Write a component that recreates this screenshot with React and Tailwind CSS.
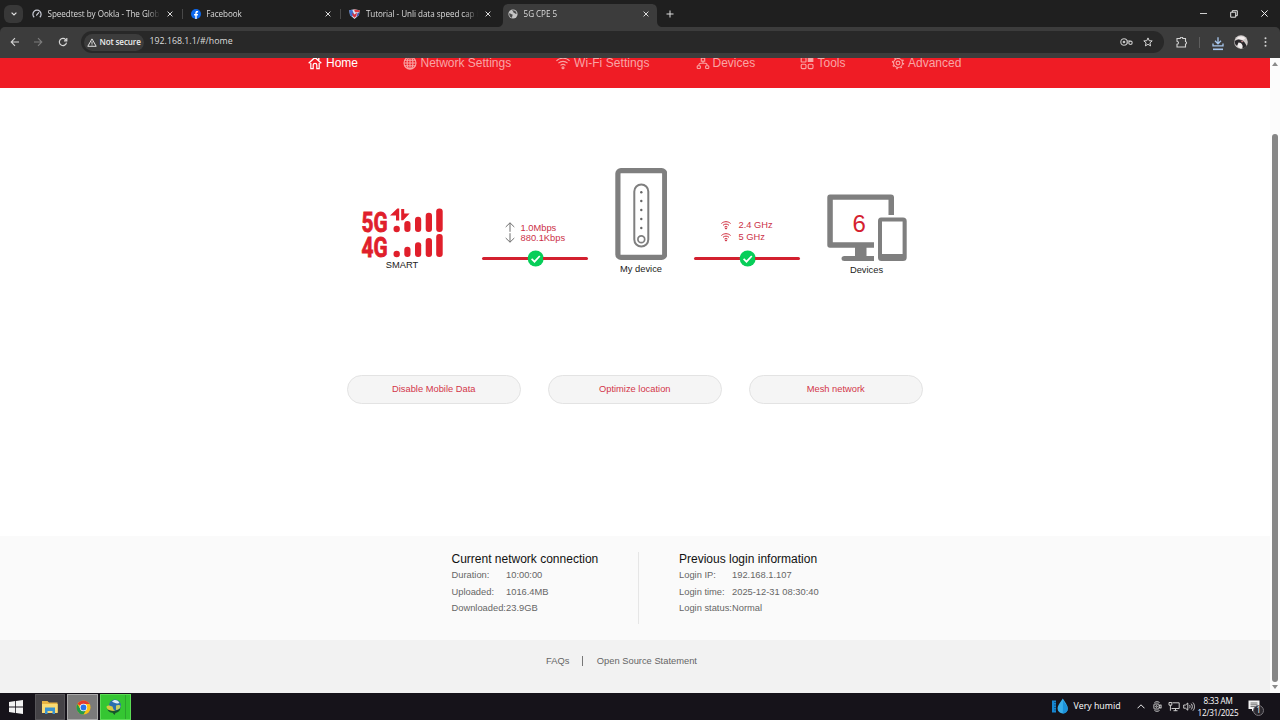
import React from "react";
import clsx from "clsx";

const TABS = [
  { title: "Speedtest by Ookla - The Glob", icon: "speedtest" },
  { title: "Facebook", icon: "facebook" },
  { title: "Tutorial - Unli data speed cap b", icon: "shield" },
  { title: "5G CPE 5", icon: "globe", active: true },
];

const NAV_ITEMS = [
  { label: "Home", icon: "home", width: "w-[95px]", text: "pl-[4px]", active: true },
  { label: "Network Settings", icon: "globe", width: "w-[153px]", text: "pl-[3.5px]" },
  { label: "Wi-Fi Settings", icon: "wifi", width: "w-[140px]", text: "pl-[4px] tracking-[0.07px]" },
  { label: "Devices", icon: "devices", width: "w-[104px]", text: "pl-[2.5px]" },
  { label: "Tools", icon: "tools", width: "w-[91px]", text: "pl-[3.5px]" },
  { label: "Advanced", icon: "gear", width: "w-[80px]", text: "pl-[3px]" },
];

const CONNECTION = [
  ["Duration:", "10:00:00"],
  ["Uploaded:", "1016.4MB"],
  ["Downloaded:", "23.9GB"],
];

const LOGIN = [
  ["Login IP:", "192.168.1.107"],
  ["Login time:", "2025-12-31 08:30:40"],
  ["Login status:", "Normal"],
];

const Favicon = ({ name }) => {
  if (name === "speedtest") {
    return (
      <svg viewBox="0 0 10 10" className="h-[10px] w-[10px] shrink-0" fill="none" stroke="#c9ccd6" strokeWidth="1.2">
        <path d="M2.2 8.3A4.1 4.1 0 1 1 7.8 8.3" />
        <path d="M4.6 6.2 6.7 3.6" strokeLinecap="round" />
      </svg>
    );
  }
  if (name === "facebook") {
    return (
      <svg viewBox="0 0 10 10" className="h-[10px] w-[10px] shrink-0">
        <circle cx="5" cy="5" r="5" fill="#0c68ee" />
        <path
          d="M4.3 10V6.6H3.1V5.1h1.2V4.1c0-1.5.7-2.1 1.9-2.1.4 0 .7 0 .9.1v1.3h-.6c-.6 0-.8.3-.8.8v.9h1.4L6.8 6.6H5.7V10z"
          fill="#fff"
        />
      </svg>
    );
  }
  if (name === "shield") {
    return (
      <svg viewBox="0 0 11 10" className="h-[10px] w-[11px] shrink-0">
        <path d="M.3 1.2 5.5.3l5.2.9L10 6 5.5 10 1 6z" fill="#dfe5f5" />
        <path d="M.3 1.2 3.2.8 5 5 3 7.8 1 6z" fill="#3f6fd0" />
        <path d="M5 .4 10.7 1.2 10.4 3 6 3.2z" fill="#e03b3f" />
        <path d="M3 3.6 5.5 5.6 8 3.6 7.4 7 5.5 8.8 3.8 7z" fill="#d3303c" />
        <path d="M8.6 3.8 10.3 3.6 10 6 7.6 8z" fill="#3a55b5" />
      </svg>
    );
  }
  return (
    <svg viewBox="0 0 10 10" className="h-[10px] w-[10px] shrink-0">
      <circle cx="5" cy="5" r="4.6" fill="#c5c5c5" />
      <path
        d="M1.2 4.2C2.6 4 3 5.2 4 5.3c.8.2.7 1 .3 1.6-.3.6 0 1.4-.4 1.9C2 8.3 1 6.5 1.2 4.2zM4 1.2c.2 1 1.4.7 1.3 1.7 0 .8 1.2.6 1.5 1.3.3.7 1.2.7 1.9.5C8.5 2.8 7 1 4 1.2z"
        fill="#4a4a4a"
      />
    </svg>
  );
};

const CloseIcon = ({ className }) => (
  <svg viewBox="0 0 6 6" className={clsx("shrink-0", className)} fill="none" stroke="#dedede" strokeWidth="1">
    <path d="M.6.6 5.4 5.4M5.4.6.6 5.4" />
  </svg>
);

const TabStrip = () => (
  <div className="flex h-[27px] items-center bg-[#1f1f1f] text-[#dcdcdc]">
    <div className="ml-[4px] flex h-[18px] w-[19px] items-center justify-center rounded-[6px] bg-[#383838]">
      <svg viewBox="0 0 6 4" className="h-[4px] w-[6px]" fill="none" stroke="#e2e2e2" strokeWidth="1.2">
        <path d="M.6.6 3 3 5.4.6" />
      </svg>
    </div>
    <div className="ml-[1px] flex h-full">
      {TABS.map((tab, i) => (
        <div
          key={tab.title}
          className={clsx("relative flex h-full items-center pl-[8px]", tab.active ? "w-[159px]" : "w-[158.7px]")}
        >
          {tab.active && (
            <svg viewBox="0 0 166 23" className="absolute top-[4px] left-[-3px] h-[23px] w-[166px]" fill="#3c3c3c">
              <path d="M0 23C4 23 6 21 6 17V6C6 2 8 0 12 0H154C158 0 160 2 160 6V17C160 21 162 23 166 23z" />
            </svg>
          )}
          <span className="relative flex w-full items-center">
            <Favicon name={tab.icon} />
            <span className="ml-[5.5px] w-[112.5px] overflow-hidden text-[8.1px] leading-[12px] tracking-[-0.05px] whitespace-nowrap [mask-image:linear-gradient(to_right,#000_88%,transparent)]">
              {tab.title}
            </span>
            <CloseIcon className="ml-[6.5px] h-[6px] w-[6px]" />
          </span>
          {i < 2 && <span className="absolute right-0 h-[10px] w-px bg-[#484848]" />}
        </div>
      ))}
    </div>
    <svg viewBox="0 0 8 8" className="ml-[7px] h-[8px] w-[8px]" fill="none" stroke="#dedede" strokeWidth="1">
      <path d="M4 .5v7M.5 4h7" />
    </svg>
    <div className="mr-[12px] ml-auto flex items-center gap-[23px]">
      <span className="h-px w-[7px] bg-[#cfcfcf]" />
      <svg viewBox="0 0 8 8" className="h-[8px] w-[8px]" fill="none" stroke="#e5e5e5" strokeWidth="1">
        <path d="M.7 2.2h5v5h-5zM2.3 2.2V.7h5v5H5.7" />
      </svg>
      <svg viewBox="0 0 7 7" className="h-[7px] w-[7px]" fill="none" stroke="#efefef" strokeWidth="1">
        <path d="m.4.4 6.2 6.2M6.6.4.4 6.6" />
      </svg>
    </div>
  </div>
);

const Toolbar = () => (
  <div className="bg-[#1f1f1f]">
    <div className="flex h-[31px] items-center rounded-t-[5px] bg-[#3c3c3c] pb-[1px]">
      <svg viewBox="0 0 10 10" className="ml-[10px] h-[10px] w-[10px]" fill="none" stroke="#d5d5d5" strokeWidth="1.1">
        <path d="M9 5H1.3M5 1.2 1.2 5 5 8.8" />
      </svg>
      <svg viewBox="0 0 10 10" className="ml-[13px] h-[10px] w-[10px]" fill="none" stroke="#7d7d7d" strokeWidth="1.1">
        <path d="M1 5h7.7M5 1.2 8.8 5 5 8.8" />
      </svg>
      <svg viewBox="0 0 10 10" className="ml-[14.5px] h-[10px] w-[10px]" fill="none" stroke="#d5d5d5" strokeWidth="1.2">
        <path d="M8.5 5.6A3.6 3.6 0 1 1 7.7 2.6L8.6 3.6M8.8 1v2.8H6" />
      </svg>
      <div className="ml-[13.5px] flex h-[22px] w-[1083px] items-center rounded-full bg-[#282828]">
        <div className="ml-[3px] flex h-[17px] w-[60px] items-center rounded-full bg-[#3c3c3c]">
          <svg viewBox="0 0 10 9" className="ml-[3px] h-[9px] w-[10px]" fill="none" stroke="#e0e0e0" strokeWidth="1">
            <path d="M5 .9 9.2 8.3H.8zM5 3.4v2.5M5 6.4v1" />
          </svg>
          <span className="ml-[2.5px] text-[8.1px] font-semibold tracking-[-0.13px] whitespace-nowrap text-[#ececec]">
            Not secure
          </span>
        </div>
        <span className="ml-[5.5px] text-[8.8px] text-[#dcdcdc]">192.168.1.1/#/home</span>
        <svg viewBox="0 0 13 8" className="mr-[10px] ml-auto h-[8px] w-[13px]" fill="none" stroke="#c8c8c8" strokeWidth="1.1">
          <circle cx="4" cy="4" r="3.2" />
          <circle cx="4" cy="4" r=".8" fill="#c8c8c8" />
          <path d="M7 3h3.2M7 5h1.5" />
          <circle cx="10.5" cy="4.8" r="1.7" />
        </svg>
        <svg viewBox="0 0 10 10" className="mr-[11px] h-[10px] w-[10px]" fill="none" stroke="#d5d5d5" strokeWidth="1">
          <path d="m5 .9 1.2 2.8 3 .2-2.3 2 .7 3L5 7.3 2.4 8.9l.7-3-2.3-2 3-.2z" />
        </svg>
      </div>
      <svg viewBox="0 0 12 11" className="ml-[12px] h-[11px] w-[12px]" fill="none" stroke="#d5d5d5" strokeWidth="1.1">
        <path d="M1 1.5h3.2a1.3 1.3 0 0 1 2.6 0h2.7v3a1.4 1.4 0 0 1 0 2.7V10H1V7.3c2-.2 2-2.7 0-3z" />
      </svg>
      <span className="ml-[11px] h-[11px] w-px bg-[#5e5e5e]" />
      <svg viewBox="0 0 12 14" className="mt-[3px] ml-[11.5px] h-[14px] w-[12px]" fill="none" stroke="#a8c7ee" strokeWidth="1.3">
        <path d="M6 .2v6.3M3 3.8l3 3 3-3M1 6.4v2.4h10V6.4" />
        <path d="M1 12.3h10" strokeWidth="1.6" />
      </svg>
      <svg viewBox="0 0 14 14" className="ml-[10.5px] h-[14px] w-[14px]">
        <circle cx="7" cy="7" r="6.8" fill="#cfcac9" />
        <path d="M.6 6c2-1.5 5-2 7-1s4 3 5 6A6.8 6.8 0 0 1 9 13.5L6 10 2 10.5A6.8 6.8 0 0 1 .6 6z" fill="#2a282b" />
        <path d="M4.5 7.5c2 0 3.5 1 4 3s-.5 3-1.5 3-3.5-2-3.5-3.5z" fill="#f1eeee" />
        <path d="M2.5 3.5c2-2.5 6-3 9-.3L9 5z" fill="#f4eeee" />
        <path d="M6.5 5.3 9.5 6.5 8 7.6z" fill="#c98d92" />
      </svg>
      <svg viewBox="0 0 3 10" className="ml-[15.5px] h-[10px] w-[3px]" fill="#d5d5d5">
        <circle cx="1.5" cy="1.2" r="1" />
        <circle cx="1.5" cy="5" r="1" />
        <circle cx="1.5" cy="8.8" r="1" />
      </svg>
    </div>
  </div>
);

const NavIcon = ({ name }) => {
  const paths = {
    home: (
      <>
        <path d="M.7 7.2 7 1.4l6.3 5.8" strokeWidth="1.4" />
        <path d="M10.8 1.8v2.5" strokeWidth="1.4" />
        <path d="M2.8 7v5.6h2.4V9c0-2.2 3.6-2.2 3.6 0v3.6h2.4V7" strokeWidth="1.2" />
      </>
    ),
    globe: (
      <>
        <circle cx="7" cy="7" r="6" />
        <ellipse cx="7" cy="7" rx="2.9" ry="6" />
        <path d="M7 1v12M1 7h12M1.7 4.2h10.6M1.7 9.8h10.6" />
      </>
    ),
    wifi: (
      <>
        <path d="M.4 4.8C4 1.3 10 1.3 13.6 4.8M2.4 7.2c2.6-2.4 6.6-2.4 9.2 0M4.5 9.4c1.5-1.3 3.5-1.3 5 0" />
        <circle cx="7" cy="11.7" r="1" />
      </>
    ),
    devices: (
      <>
        <rect x="5.3" y="2.2" width="3.4" height="3" />
        <path d="M7 5.2v2M2.8 9.6c0-1.6.6-2.4 2-2.4h4.4c1.4 0 2 .8 2 2.4" />
        <rect x="1.2" y="9.7" width="3.2" height="2.8" rx=".8" />
        <rect x="9.6" y="9.7" width="3.2" height="2.8" rx=".8" />
      </>
    ),
    tools: (
      <>
        <rect x="1.2" y="1.6" width="4.8" height="4.4" rx=".6" />
        <path d="M8.3 1.6h4.5v3.8H8.3z" fill="currentColor" />
        <rect x="1.2" y="8.2" width="4.8" height="4.4" rx="1" />
        <rect x="8.2" y="8.2" width="4.8" height="4.4" rx="1" />
      </>
    ),
    gear: (
      <>
        <circle cx="7" cy="7" r="4.5" />
        <circle cx="7" cy="7" r="1.9" />
        <circle cx="7" cy="7" r="5.5" strokeDasharray="1.6 2.72" strokeWidth="1.4" />
      </>
    ),
  };
  return (
    <svg viewBox="0 0 14 14" className="h-[14px] w-[14px] shrink-0" fill="none" stroke="currentColor" strokeWidth="1.1">
      {paths[name]}
    </svg>
  );
};

const NavBar = () => (
  <nav className="h-[30px] overflow-hidden bg-[#ef1c25]">
    <div className="-mt-[2px] flex pl-[308px]">
      {NAV_ITEMS.map((item) => (
        <a
          key={item.label}
          className={clsx(
            "flex h-[14px] shrink-0 items-center text-[12px] leading-[14px] whitespace-nowrap",
            item.width,
            item.active ? "text-white" : "text-[#f9a5a5]",
          )}
        >
          <NavIcon name={item.icon} />
          <span className={item.text}>{item.label}</span>
        </a>
      ))}
    </div>
  </nav>
);

const SignalIcon = () => (
  <svg viewBox="0 0 84 54" className="h-[54px] w-[84px]" fill="#e01f2b">
    <g
      fontFamily="Roboto, 'Liberation Sans', sans-serif"
      fontWeight="700"
      fontSize="28.5"
      stroke="#e01f2b"
      strokeWidth="0.9"
    >
      <text x="0.5" y="25.6" textLength="26" lengthAdjust="spacingAndGlyphs">
        5G
      </text>
      <text x="0.5" y="50.8" textLength="26" lengthAdjust="spacingAndGlyphs">
        4G
      </text>
    </g>
    <circle cx="35.7" cy="23" r="3.2" />
    <rect x="43.3" y="15" width="6.2" height="11" rx="3" />
    <rect x="54" y="10.7" width="6.2" height="15.3" rx="3" />
    <rect x="64.7" y="6.7" width="6.3" height="19.3" rx="3" />
    <rect x="75.2" y="2.5" width="6.5" height="23.5" rx="3" />
    {/* up / down traffic arrows */}
    <path d="M38.2 2.5V14.5H35V9.6H29L36.3 2.5z" />
    <path d="M40.2 3H43.2V7.5H48.6L42.2 14.3H40.2z" />
    <circle cx="35.7" cy="48" r="3.2" />
    <rect x="43.3" y="40.7" width="6.2" height="10.3" rx="3" />
    <rect x="54" y="36.3" width="6.2" height="14.7" rx="3" />
    <rect x="64.7" y="32" width="6.3" height="19" rx="3" />
    <rect x="75.2" y="28" width="6.5" height="23" rx="3" />
  </svg>
);

const RouterIcon = () => (
  <svg viewBox="0 0 52 92" className="h-[92px] w-[52px]" fill="none" stroke="#7f7f7f">
    <rect x="2.9" y="2.6" width="46.8" height="86.8" rx="3" strokeWidth="5.2" />
    <rect x="19.3" y="16.5" width="14" height="62" rx="7" strokeWidth="2" />
    <g fill="#666" stroke="none">
      {[24.3, 33, 42, 51, 60].map((y) => (
        <circle key={y} cx="26.3" cy={y} r="1.2" />
      ))}
    </g>
    <circle cx="26.3" cy="71.3" r="3.4" strokeWidth="1.7" />
  </svg>
);

const DevicesIcon = () => (
  <svg viewBox="0 0 80 68" className="h-[68px] w-[80px]" fill="#7f7f7f">
    <path
      fillRule="evenodd"
      d="M3 .5H64Q67 .5 67 3.5V21H61.5V5.8H5.8V48.2H47V53.7H39.5V62H47V67H17.5Q14.5 67 14.5 64.5T17.5 62H28V53.7H3Q.3 53.7.3 51V3.5Q.3.5 3 .5z"
    />
    <path
      fillRule="evenodd"
      d="M54 23.5H76Q79.7 23.5 79.7 27V63.5Q79.7 67 76 67H54.5Q51 67 51 63.5V27Q51 23.5 54 23.5zM55 27.5V60H75.6V27.5z"
    />
    <text x="32.2" y="38" textAnchor="middle" fontFamily="'Liberation Sans', Arial, sans-serif" fontSize="24" fill="#d51f30">
      6
    </text>
  </svg>
);

const LinkLine = () => (
  <div className="flex h-[17px] w-[106px] items-center">
    <span className="h-[2.5px] flex-1 rounded-l-full bg-[#d3202f]" />
    <svg viewBox="0 0 17 17" className="-mx-px h-[17px] w-[17px] shrink-0">
      <circle cx="8.7" cy="8.5" r="8" fill="#07ce59" />
      <path d="m4.6 8.9 2.9 2.8 5.3-5.7" fill="none" stroke="#fff" strokeWidth="1.7" />
    </svg>
    <span className="h-[2.5px] flex-1 rounded-r-full bg-[#d3202f]" />
  </div>
);

const ArrowIcon = ({ down }) => (
  <svg
    viewBox="0 0 10 10"
    className={clsx("h-[10px] w-[10px] shrink-0", down && "rotate-180")}
    fill="none"
    stroke="#6f6f6f"
    strokeWidth="1"
  >
    <path d="M5 .8v9M.7 5 5 .8 9.3 5" />
  </svg>
);

const BandIcon = () => (
  <svg viewBox="0 0 10 9" className="h-[9px] w-[10px] shrink-0" fill="none" stroke="#d02a3c" strokeWidth="1">
    <path d="M.4 2.5C3 .1 7 .1 9.6 2.5M2 4.3c1.8-1.6 4.2-1.6 6 0M3.5 6c.9-.8 2.1-.8 3 0" />
    <circle cx="5" cy="7.4" r=".6" fill="#d02a3c" />
  </svg>
);

const NetworkMap = () => (
  <section className="flex h-[188px] pt-[80px] pl-[361px] text-[9.33px] leading-[11px] text-[#222]">
    <div className="flex w-[84px] flex-col items-center pt-[38px] pr-[1px]">
      <SignalIcon />
      <span className="pr-[1px]">SMART</span>
    </div>
    <div className="ml-[37px] w-[106px] pt-[54px] text-[#cc3048]">
      <div className="flex h-[10.5px] items-center pl-[22.5px]">
        <ArrowIcon />
        <span className="pt-[1.5px] pl-[6px]">1.0Mbps</span>
      </div>
      <div className="flex h-[10.5px] items-center pl-[22.5px]">
        <ArrowIcon down />
        <span className="pt-[1.5px] pl-[6px]">880.1Kbps</span>
      </div>
      <div className="pt-[7px]">
        <LinkLine />
      </div>
    </div>
    <div className="ml-[27px] flex w-[52px] flex-col items-center">
      <RouterIcon />
      <span className="mt-[4px] whitespace-nowrap">My device</span>
    </div>
    <div className="ml-[27px] w-[106px] pt-[51px] text-[#cc3048]">
      <div className="flex h-[12px] items-center pl-[27px]">
        <BandIcon />
        <span className="pt-[1.5px] pl-[7.5px]">2.4 GHz</span>
      </div>
      <div className="flex h-[12px] items-center pl-[27px]">
        <BandIcon />
        <span className="pt-[1.5px] pl-[7.5px]">5 GHz</span>
      </div>
      <div className="pt-[7px]">
        <LinkLine />
      </div>
    </div>
    <div className="ml-[27px] flex w-[80px] flex-col items-center pt-[26px]">
      <DevicesIcon />
      <span className="mt-[3px] pr-[1px]">Devices</span>
    </div>
  </section>
);

const InfoColumn = ({ title, rows, labelWidth }) => (
  <div>
    <h2 className="text-[12px] leading-[15px] whitespace-nowrap text-[#111]">{title}</h2>
    <dl className="mt-[1px] text-[9.33px] text-[#666]">
      {rows.map(([label, value]) => (
        <div key={label} className="flex h-[16.6px] items-center whitespace-nowrap">
          <dt className={labelWidth}>{label}</dt>
          <dd>{value}</dd>
        </div>
      ))}
    </dl>
  </div>
);

const ScrollBar = () => (
  <div className="flex w-[10px] flex-col items-center bg-[#fcfcfc]">
    <svg viewBox="0 0 6 4" className="mt-[4px] h-[4px] w-[6px]" fill="#8a8a8a">
      <path d="M3 0 6 4H0z" />
    </svg>
    <div className="mt-[68px] h-[548px] w-[6px] rounded-full bg-[#868686]" />
    <svg viewBox="0 0 6 4" className="mt-[3px] h-[4px] w-[6px]" fill="#8a8a8a">
      <path d="M3 4 6 0H0z" />
    </svg>
  </div>
);

const Taskbar = () => (
  <div className="flex h-[27px] bg-[#16131a] text-white">
    <div className="flex w-[35px] items-center pl-[9px]">
      <svg viewBox="0 0 14 14" className="h-[14px] w-[14px]" fill="#f2f2f2">
        <path d="M0 2 6.2 1.1v5.5H0zM7 1 14 0v6.6H7zM0 7.4h6.2v5.5L0 12zM7 7.4h7V14l-7-1z" />
      </svg>
    </div>
    <div className="mt-[1px] flex w-[30px] items-center justify-center border border-[#565458] bg-[#444246]">
      <svg viewBox="0 0 16 14" className="h-[14px] w-[16px]">
        <path d="M0 1h5.5L7 2.5h8.5V12H0z" fill="#e8b443" />
        <path d="M0 4h15.7v9H0z" fill="#fadb73" />
        <path d="M3 7.5h10V14h-2.5v-3h-5v3H3z" fill="#3b93cf" />
      </svg>
    </div>
    <div className="mt-[1px] ml-[2px] flex w-[31px] items-center justify-center border border-[#aaa] bg-[#7b7b7b]">
      <svg viewBox="0 0 16 16" className="mt-px ml-px h-[15px] w-[15px]">
        <circle cx="8" cy="8" r="7.5" fill="#fbc116" />
        <path d="M8 8 1.5 4.25A7.5 7.5 0 0 1 14.5 4.25H8z" fill="#e33b2e" />
        <path d="M1.5 4.25A7.5 7.5 0 0 0 8 15.5L11.2 9.8 4.8 9.8z" fill="#229a4b" />
        <circle cx="8" cy="8" r="3.9" fill="#fff" />
        <circle cx="8" cy="8" r="3.1" fill="#2a72e8" />
      </svg>
    </div>
    <div className="mt-[1px] ml-[2px] flex w-[31px] items-center border border-[#5bdb55] bg-[#35c632] pl-[4px]">
      <svg viewBox="0 0 18 16" className="h-[16px] w-[18px]">
        <circle cx="10" cy="6.5" r="6" fill="#2b6faf" />
        <path d="M7 2.5c2-2.5 6-2 7.500 1.500C12 5 9 4 7 2.500z" fill="#dceaf5" />
        <path d="M11 6.500c2-1 4-.5 4.500.5-.5 3-2.500 4-4.500 4z" fill="#c9cf62" />
        <path d="M1.500 7.500c1.500-2 4-.5 6 0l1 3 2 1-3 .5C4.500 12 1.500 10 1.500 7.500z" fill="#d9c93f" />
        <path d="M2.500 10.500c4 2 9 2 13-1-1 3-3 4-5 4.500l-1 2-2-2.200C5 13.500 3 12.500 2.500 10.500z" fill="#17552a" />
      </svg>
      <span className="ml-[2px] h-full w-px bg-[#2ba52c]" />
    </div>

    <div className="ml-auto flex items-center">
      <svg viewBox="0 0 18 17" className="h-[17px] w-[18px]">
        <path d="M1 2.5h4v12H1z" fill="#1687d2" />
        <path d="M3 4.5h2M3 7h2M3 9.5h2M3 12h2" stroke="#0b4777" strokeWidth=".8" />
        <path d="M11.8.5c2 3.5 5 6.5 5 10a5.1 5.1 0 0 1-10.2 0c0-3.5 3.2-6.5 5.2-10z" fill="#38aeea" />
        <path d="M12 2.5c2 3 4.8 5.3 4.8 8.2a5 5 0 0 1-5 5z" fill="#1c91d9" />
      </svg>
      <span className="ml-[4.5px] w-[47px] text-[8.8px] whitespace-nowrap">Very humid</span>
      <svg viewBox="0 0 8 5" className="ml-[16px] h-[5px] w-[8px]" fill="none" stroke="#eee" strokeWidth="1">
        <path d="M.5 4.3 4 .8l3.5 3.5" />
      </svg>
      <svg viewBox="0 0 9 11" className="ml-[8.5px] h-[11px] w-[9px]" fill="none" stroke="#e0e0e0" strokeWidth=".9">
        <rect x=".9" y="3" width="5.2" height="5" rx=".8" />
        <path d="m6.1 4.8 2-1v3.4l-2-1M1.5 1.5c1.5-1 3.5-1 5 0M1.5 9.5c1.5 1 3.5 1 5 0" />
        <circle cx="3.5" cy="5.5" r=".8" />
      </svg>
      <svg viewBox="0 0 12 11" className="ml-[5.5px] h-[11px] w-[12px]" fill="none" stroke="#e0e0e0" strokeWidth=".9">
        <path d="M4.5 1.8h6.7v5.7H3.5M7.5 7.5v2M5.5 9.7h4M1 1.5h2.8v2.7H1zM2.4 4.2v5.5" />
      </svg>
      <svg viewBox="0 0 12 11" className="ml-[3.5px] h-[11px] w-[12px]" fill="none" stroke="#e0e0e0" strokeWidth=".9">
        <path d="M.7 4h1.8l2.3-2v7.2L2.5 7.2H.7zM6.5 4c.7.9.7 2.3 0 3.2M8.2 2.7c1.5 1.6 1.5 4.2 0 5.8M9.9 1.5c2.1 2.3 2.1 6 0 8.2" />
      </svg>
      <div className="ml-[2px] w-[42px] text-center text-[8.1px] leading-[12px] tracking-[-0.22px] whitespace-nowrap">
        <div>8:33 AM</div>
        <div>12/31/2025</div>
      </div>
      <div className="relative mr-[15px] ml-[8px] h-[16px] w-[18px]">
        <svg viewBox="0 0 18 16" className="h-[16px] w-[18px]">
          <path d="M1.5 1.5h11v8.5H7.5L5 12.5V10H1.5z" fill="#f4f4f4" />
          <path d="M3.5 4h7M3.5 5.8h7M3.5 7.6h5" stroke="#333" strokeWidth=".7" />
        </svg>
        <span className="absolute top-[6px] left-[6px] flex h-[11px] w-[11px] items-center justify-center rounded-full border border-[#77747a] bg-[#2b282e] text-[8.1px] leading-none">
          1
        </span>
      </div>
    </div>
  </div>
);

const App = () => {
  return (
    <div className="flex h-[720px] w-[1280px] flex-col overflow-hidden bg-white font-['Open_Sans','Noto_Sans',sans-serif]">
      <TabStrip />
      <Toolbar />

      <div className="flex h-[635px]">
        <main className="flex w-[1270px] flex-col font-['Liberation_Sans',Arial,sans-serif]">
          <NavBar />

          <div className="h-[448px]">
            <NetworkMap />
            {/* Quick actions */}
            <div className="flex gap-[27.5px] pt-[98.5px] pl-[347px]">
              {["Disable Mobile Data", "Optimize location", "Mesh network"].map((label) => (
                <button
                  key={label}
                  className="h-[29.5px] w-[173.5px] rounded-full border border-[#e3e3e3] bg-[#f5f5f5] pt-[2px] text-[9.33px] text-[#d3354a]"
                >
                  {label}
                </button>
              ))}
            </div>
          </div>

          {/* Status summary */}
          <section className="flex h-[104px] bg-[#fafafa] pt-[16px] pl-[451.5px]">
            <div className="h-[72px] w-[187px] border-r border-[#e6e6e6]">
              <InfoColumn title="Current network connection" rows={CONNECTION} labelWidth="w-[54.5px]" />
            </div>
            <div className="pl-[40.5px]">
              <InfoColumn title="Previous login information" rows={LOGIN} labelWidth="w-[53px]" />
            </div>
          </section>

          <footer className="flex h-[53px] items-start bg-[#f2f2f2] pt-[14px] pl-[546px] text-[9.33px] leading-[14px] text-[#666]">
            <span>FAQs</span>
            <span className="mt-[2px] mr-[13.5px] ml-[13px] h-[10px] w-px bg-[#777]" />
            <span>Open Source Statement</span>
          </footer>
        </main>
        <ScrollBar />
      </div>

      <Taskbar />
    </div>
  );
};

export default App;
